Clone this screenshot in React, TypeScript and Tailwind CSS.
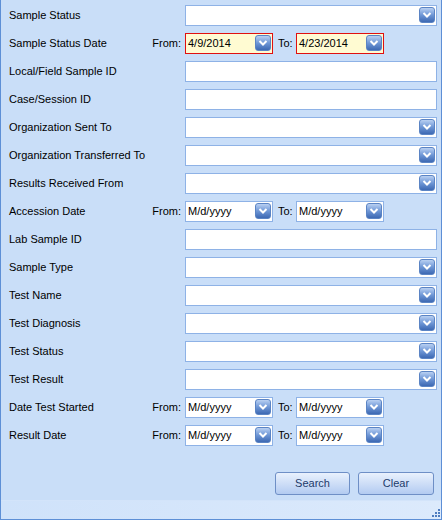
import React from "react";

type Row =
  | { label: string; kind: "select" }
  | { label: string; kind: "text" }
  | { label: string; kind: "range"; from?: string; to?: string; invalid?: boolean };

const rows: Row[] = [
  { label: "Sample Status", kind: "select" },
  { label: "Sample Status Date", kind: "range", from: "4/9/2014", to: "4/23/2014", invalid: true },
  { label: "Local/Field Sample ID", kind: "text" },
  { label: "Case/Session ID", kind: "text" },
  { label: "Organization Sent To", kind: "select" },
  { label: "Organization Transferred To", kind: "select" },
  { label: "Results Received From", kind: "select" },
  { label: "Accession Date", kind: "range" },
  { label: "Lab Sample ID", kind: "text" },
  { label: "Sample Type", kind: "select" },
  { label: "Test Name", kind: "select" },
  { label: "Test Diagnosis", kind: "select" },
  { label: "Test Status", kind: "select" },
  { label: "Test Result", kind: "select" },
  { label: "Date Test Started", kind: "range" },
  { label: "Result Date", kind: "range" },
];

const DropButton = () => (
  <span className="flex h-4 w-4 shrink-0 items-center justify-center rounded-[3px] border border-[#5b84c4] bg-gradient-to-b from-[#b9d0f2] via-[#6f97d6] to-[#3d69b3]">
    <svg width="10" height="8" viewBox="0 0 10 8">
      <path d="M1.5 2 L5 5.5 L8.5 2" fill="none" stroke="#ffffff" strokeWidth="2" />
    </svg>
  </span>
);

const Select = () => (
  <div className="flex h-[21px] w-[252px] items-center justify-end border border-[#8eb2e6] bg-white pr-[1px]">
    <DropButton />
  </div>
);

const DateBox = ({ value, invalid }: { value?: string; invalid?: boolean }) => (
  <div
    className={
      invalid
        ? "flex h-[21px] w-[88px] items-center justify-between border border-[#e01010] bg-[#fffbd2] pl-[2px] pr-[1px]"
        : "flex h-[21px] w-[88px] items-center justify-between border border-[#8eb2e6] bg-white pl-[2px] pr-[1px]"
    }
  >
    <span className="text-[11px] text-black">{value ?? "M/d/yyyy"}</span>
    <DropButton />
  </div>
);

export default function App() {
  return (
    <div
      className="flex h-[520px] w-[442px] flex-col border-x border-b border-[#5d8fd6] bg-[#c9def8] text-[11px] text-black"
      style={{ fontFamily: '"Liberation Sans", Arial, sans-serif' }}
    >
      <div className="flex flex-col pt-[1px]">
        {rows.map((row) => (
          <div key={row.label} className="flex h-[28px] items-center">
            <div className="w-[145px] pl-2">{row.label}</div>
            {row.kind === "select" && (
              <div className="ml-[39px]">
                <Select />
              </div>
            )}
            {row.kind === "text" && (
              <div className="ml-[39px] h-[21px] w-[252px] border border-[#8eb2e6] bg-white" />
            )}
            {row.kind === "range" && (
              <div className="flex items-center">
                <span className="w-[39px] pr-[4px] text-right">From:</span>
                <DateBox value={row.from} invalid={row.invalid} />
                <span className="w-[23px] pl-[5px]">To:</span>
                <DateBox value={row.to} invalid={row.invalid} />
              </div>
            )}
          </div>
        ))}
      </div>
      <div className="flex flex-1 items-end justify-end gap-[8px] pb-[5px] pr-[7px]">
        <button className="h-[23px] w-[75px] rounded-[3px] border border-[#6e8fc6] bg-gradient-to-b from-[#e9f1fd] to-[#b3cbf1] text-[11px] text-[#1d3b6a]">
          Search
        </button>
        <button className="h-[23px] w-[76px] rounded-[3px] border border-[#6e8fc6] bg-gradient-to-b from-[#e9f1fd] to-[#b3cbf1] text-[11px] text-[#1d3b6a]">
          Clear
        </button>
      </div>
      <div className="relative h-[19px] border-t border-[#d3e4fa] bg-gradient-to-r from-[#cfe2fa] to-[#dceafc]">
        <svg className="absolute bottom-[1px] right-[1px]" width="10" height="10" viewBox="0 0 10 10">
          {[
            [8, 0], [8, 3], [5, 3], [8, 6], [5, 6], [2, 6],
          ].map(([x, y]) => (
            <rect key={`${x}-${y}`} x={x} y={y + 1} width="2" height="2" fill="#4d7cc0" />
          ))}
        </svg>
      </div>
    </div>
  );
}
